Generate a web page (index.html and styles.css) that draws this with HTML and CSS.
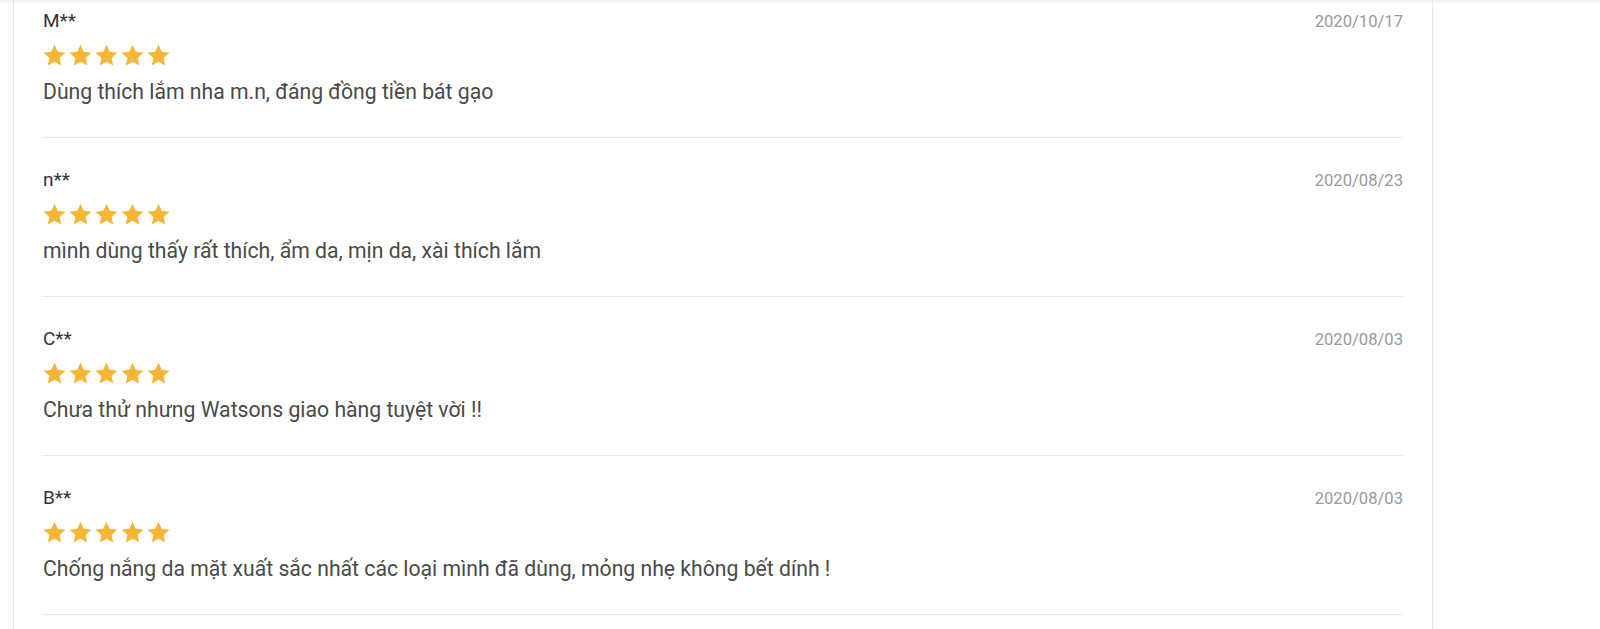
FILE: index.html
```html
<!DOCTYPE html>
<html lang="vi">
<head>
<meta charset="utf-8">
<title>Đánh giá</title>
<link rel="stylesheet" href="styles.css">
</head>
<body>
<div class="page">
  <section class="card">
    <ul class="reviews">
      <li class="review">
        <div class="head"><span class="name">M**</span><span class="date">2020/10/17</span></div>
        <div class="stars">
          <svg class="star" viewBox="0 0 24 24"><path d="M12 1.6l3.1 6.9 7.4.8-5.6 5 1.6 7.4L12 17.9l-6.5 3.8 1.6-7.4-5.6-5 7.4-.8z"/></svg>
          <svg class="star" viewBox="0 0 24 24"><path d="M12 1.6l3.1 6.9 7.4.8-5.6 5 1.6 7.4L12 17.9l-6.5 3.8 1.6-7.4-5.6-5 7.4-.8z"/></svg>
          <svg class="star" viewBox="0 0 24 24"><path d="M12 1.6l3.1 6.9 7.4.8-5.6 5 1.6 7.4L12 17.9l-6.5 3.8 1.6-7.4-5.6-5 7.4-.8z"/></svg>
          <svg class="star" viewBox="0 0 24 24"><path d="M12 1.6l3.1 6.9 7.4.8-5.6 5 1.6 7.4L12 17.9l-6.5 3.8 1.6-7.4-5.6-5 7.4-.8z"/></svg>
          <svg class="star" viewBox="0 0 24 24"><path d="M12 1.6l3.1 6.9 7.4.8-5.6 5 1.6 7.4L12 17.9l-6.5 3.8 1.6-7.4-5.6-5 7.4-.8z"/></svg>
        </div>
        <p class="text">Dùng thích lắm nha m.n, đáng đồng tiền bát gạo</p>
      </li>
      <li class="review">
        <div class="head"><span class="name">n**</span><span class="date">2020/08/23</span></div>
        <div class="stars">
          <svg class="star" viewBox="0 0 24 24"><path d="M12 1.6l3.1 6.9 7.4.8-5.6 5 1.6 7.4L12 17.9l-6.5 3.8 1.6-7.4-5.6-5 7.4-.8z"/></svg>
          <svg class="star" viewBox="0 0 24 24"><path d="M12 1.6l3.1 6.9 7.4.8-5.6 5 1.6 7.4L12 17.9l-6.5 3.8 1.6-7.4-5.6-5 7.4-.8z"/></svg>
          <svg class="star" viewBox="0 0 24 24"><path d="M12 1.6l3.1 6.9 7.4.8-5.6 5 1.6 7.4L12 17.9l-6.5 3.8 1.6-7.4-5.6-5 7.4-.8z"/></svg>
          <svg class="star" viewBox="0 0 24 24"><path d="M12 1.6l3.1 6.9 7.4.8-5.6 5 1.6 7.4L12 17.9l-6.5 3.8 1.6-7.4-5.6-5 7.4-.8z"/></svg>
          <svg class="star" viewBox="0 0 24 24"><path d="M12 1.6l3.1 6.9 7.4.8-5.6 5 1.6 7.4L12 17.9l-6.5 3.8 1.6-7.4-5.6-5 7.4-.8z"/></svg>
        </div>
        <p class="text">mình dùng thấy rất thích, ẩm da, mịn da, xài thích lắm</p>
      </li>
      <li class="review">
        <div class="head"><span class="name">C**</span><span class="date">2020/08/03</span></div>
        <div class="stars">
          <svg class="star" viewBox="0 0 24 24"><path d="M12 1.6l3.1 6.9 7.4.8-5.6 5 1.6 7.4L12 17.9l-6.5 3.8 1.6-7.4-5.6-5 7.4-.8z"/></svg>
          <svg class="star" viewBox="0 0 24 24"><path d="M12 1.6l3.1 6.9 7.4.8-5.6 5 1.6 7.4L12 17.9l-6.5 3.8 1.6-7.4-5.6-5 7.4-.8z"/></svg>
          <svg class="star" viewBox="0 0 24 24"><path d="M12 1.6l3.1 6.9 7.4.8-5.6 5 1.6 7.4L12 17.9l-6.5 3.8 1.6-7.4-5.6-5 7.4-.8z"/></svg>
          <svg class="star" viewBox="0 0 24 24"><path d="M12 1.6l3.1 6.9 7.4.8-5.6 5 1.6 7.4L12 17.9l-6.5 3.8 1.6-7.4-5.6-5 7.4-.8z"/></svg>
          <svg class="star" viewBox="0 0 24 24"><path d="M12 1.6l3.1 6.9 7.4.8-5.6 5 1.6 7.4L12 17.9l-6.5 3.8 1.6-7.4-5.6-5 7.4-.8z"/></svg>
        </div>
        <p class="text">Chưa thử nhưng Watsons giao hàng tuyệt vời !!</p>
      </li>
      <li class="review">
        <div class="head"><span class="name">B**</span><span class="date">2020/08/03</span></div>
        <div class="stars">
          <svg class="star" viewBox="0 0 24 24"><path d="M12 1.6l3.1 6.9 7.4.8-5.6 5 1.6 7.4L12 17.9l-6.5 3.8 1.6-7.4-5.6-5 7.4-.8z"/></svg>
          <svg class="star" viewBox="0 0 24 24"><path d="M12 1.6l3.1 6.9 7.4.8-5.6 5 1.6 7.4L12 17.9l-6.5 3.8 1.6-7.4-5.6-5 7.4-.8z"/></svg>
          <svg class="star" viewBox="0 0 24 24"><path d="M12 1.6l3.1 6.9 7.4.8-5.6 5 1.6 7.4L12 17.9l-6.5 3.8 1.6-7.4-5.6-5 7.4-.8z"/></svg>
          <svg class="star" viewBox="0 0 24 24"><path d="M12 1.6l3.1 6.9 7.4.8-5.6 5 1.6 7.4L12 17.9l-6.5 3.8 1.6-7.4-5.6-5 7.4-.8z"/></svg>
          <svg class="star" viewBox="0 0 24 24"><path d="M12 1.6l3.1 6.9 7.4.8-5.6 5 1.6 7.4L12 17.9l-6.5 3.8 1.6-7.4-5.6-5 7.4-.8z"/></svg>
        </div>
        <p class="text">Chống nắng da mặt xuất sắc nhất các loại mình đã dùng, mỏng nhẹ không bết dính !</p>
      </li>
    </ul>
  </section>
</div>
</body>
</html>
```

FILE: styles.css
```css
html, body {
  margin: 0;
  padding: 0;
  height: 100%;
  overflow: hidden;
}

body {
  background: #fff linear-gradient(#eeeeee, #ffffff 4px) no-repeat;
  font-family: Roboto, "Noto Sans", "Liberation Sans", sans-serif;
}

.page {
  padding-left: 13px;
  width: 1420px;
}

.card {
  border-left: 1px solid #e6e6e6;
  border-right: 1px solid #e6e6e6;
  padding: 0 29px 0 28px;
  min-height: 700px;
}

.reviews {
  list-style: none;
  margin: -21px 0 0 0;
  padding: 0;
}

.review {
  border-bottom: 1px solid #e8e8e8;
  padding: 30px 0 0 0;
  height: 128px;
  box-sizing: content-box;
}

.review .head,
.review .text {
  margin-left: 1px;
}

.head {
  display: flex;
  justify-content: space-between;
  align-items: baseline;
  height: 24px;
  line-height: 24px;
}

.name {
  font-size: 19px;
  color: #333333;
}

.date {
  font-size: 16.6px;
  color: #9a9a9a;
}

.stars {
  display: flex;
  gap: 1px;
  margin-top: 10px;
  height: 25px;
}

.star {
  width: 25px;
  height: 25px;
  fill: #f6b535;
}

.text {
  margin: 10px 0 0 0;
  font-size: 21.2px;
  line-height: 28px;
  color: #4a4a4a;
}
```
